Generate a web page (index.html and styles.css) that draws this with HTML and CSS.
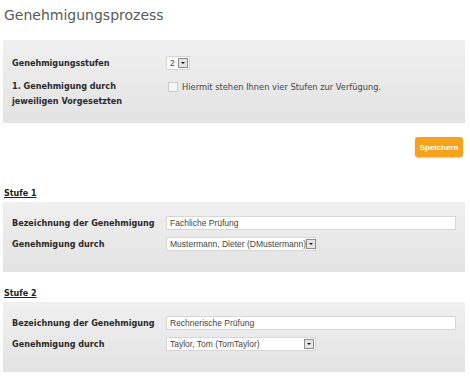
FILE: index.html
```html
<!DOCTYPE html>
<html lang="de">
<head>
    <meta charset="UTF-8">
    <title>Genehmigungsprozess</title>
    <link rel="stylesheet" href="styles.css">
</head>
<body>
    <h1 class="title">Genehmigungsprozess</h1>

    <div class="panel panel-main">
        <div class="row">
            <div class="label">Genehmigungsstufen</div>
            <div class="field">
                <span class="select select-small">2<span class="arrow"></span></span>
            </div>
        </div>
        <div class="row row-top">
            <div class="label label-multi">1. Genehmigung durch<br>jeweiligen Vorgesetzten</div>
            <div class="field field-check">
                <span class="checkbox"></span>
                <span class="hint">Hiermit stehen Ihnen vier Stufen zur Verfügung.</span>
            </div>
        </div>
    </div>

    <div class="actions">
        <button class="button-save">Speichern</button>
    </div>

    <h2 class="stage-title">Stufe 1</h2>
    <div class="panel panel-stage">
        <div class="row">
            <div class="label">Bezeichnung der Genehmigung</div>
            <div class="field"><span class="input">Fachliche Prüfung</span></div>
        </div>
        <div class="row">
            <div class="label">Genehmigung durch</div>
            <div class="field">
                <span class="select select-wide">Mustermann, Dieter (DMustermann)<span class="arrow"></span></span>
            </div>
        </div>
    </div>

    <h2 class="stage-title">Stufe 2</h2>
    <div class="panel panel-stage">
        <div class="row">
            <div class="label">Bezeichnung der Genehmigung</div>
            <div class="field"><span class="input">Rechnerische Prüfung</span></div>
        </div>
        <div class="row">
            <div class="label">Genehmigung durch</div>
            <div class="field">
                <span class="select select-wide">Taylor, Tom (TomTaylor)<span class="arrow"></span></span>
            </div>
        </div>
    </div>
</body>
</html>
```

FILE: styles.css
```css
body {
    margin: 0;
    padding: 0 5px 0 3px;
    background-color: #ffffff;
    font-family: "DejaVu Sans", Verdana, sans-serif;
    color: #333333;
}
.title {
    margin: 0;
    padding: 7px 0 0 1px;
    height: 33px;
    font-size: 14px;
    font-weight: normal;
    color: #5a5a5a;
}
.panel {
    background: linear-gradient(#f0f0f0, #e3e3e3);
    padding: 0 9px;
}
.panel-main {
    padding-top: 16px;
    padding-bottom: 14px;
}
.panel-stage {
    padding-top: 14px;
    padding-bottom: 21px;
}
.row {
    display: flex;
    align-items: center;
    min-height: 14px;
}
.row + .row {
    margin-top: 7px;
}
.row-top {
    align-items: flex-start;
}
.panel-main .row + .row {
    margin-top: 9px;
}
.label {
    width: 154px;
    flex: none;
    font-size: 8.1px;
    font-weight: bold;
    color: #2a2a2a;
    line-height: 14px;
}
.label-multi {
    line-height: 15px;
}
.field {
    flex: 1;
    display: flex;
    align-items: center;
}
.field-check {
    padding-top: 3px;
}
.select,
.input {
    box-sizing: border-box;
    height: 14px;
    background-color: #ffffff;
    border: 1px solid #d6d6d6;
    font-family: "Liberation Sans", Arial, sans-serif;
    font-size: 8.5px;
    color: #444444;
    white-space: nowrap;
    display: flex;
    align-items: center;
    padding-left: 3px;
}
.input {
    width: 290px;
}
.select {
    justify-content: space-between;
    padding-right: 1px;
}
.select-small {
    width: 24px;
}
.select-wide {
    width: 150px;
}
.arrow {
    box-sizing: border-box;
    flex: none;
    width: 10px;
    height: 10px;
    background-color: #e4e4e4;
    border: 1px solid #8c8c8c;
    position: relative;
}
.arrow::after {
    content: "";
    position: absolute;
    left: 2px;
    top: 3px;
    border-left: 2px solid transparent;
    border-right: 2px solid transparent;
    border-top: 2px solid #111111;
}
.checkbox {
    box-sizing: border-box;
    width: 10px;
    height: 10px;
    margin-left: 2px;
    border: 1px solid #cfcfcf;
    background-color: #f7f7f7;
}
.hint {
    margin-left: 4px;
    font-size: 8.3px;
    color: #444444;
}
.actions {
    display: flex;
    justify-content: flex-end;
    padding: 14px 2px 0 0;
    height: 20px;
}
.button-save {
    width: 48px;
    height: 20px;
    padding: 0;
    border: none;
    border-radius: 3px;
    background-color: #f5a31c;
    box-shadow: 0 1px 2px rgba(0, 0, 0, 0.2);
    color: #ffffff;
    font-family: "Liberation Sans", Arial, sans-serif;
    font-size: 8px;
    font-weight: bold;
}
.stage-title {
    margin: 0;
    padding: 0 0 0 1px;
    font-size: 8px;
    font-weight: bold;
    color: #222222;
    text-decoration: underline;
    line-height: 12px;
}
.actions + .stage-title {
    margin-top: 31px;
}
.panel + .stage-title {
    margin-top: 16px;
}
.stage-title + .panel {
    margin-top: 2px;
}
```
